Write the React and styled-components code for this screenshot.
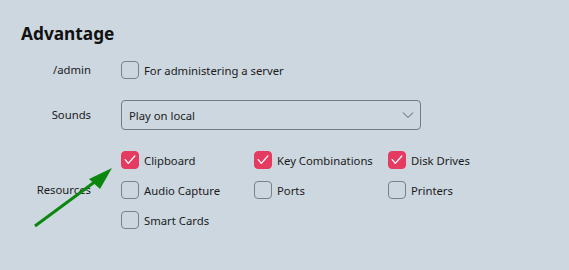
import React from "react";
import styled, { createGlobalStyle } from "styled-components";

const Global = createGlobalStyle`
  html, body { margin: 0; padding: 0; background: #cdd7e0; }
  body { font-family: "Segoe UI", "Noto Sans", "Open Sans", sans-serif; color: #1b1b1b; }
`;

const Page = styled.div`
  position: relative;
  width: 569px;
  height: 270px;
  box-sizing: border-box;
  padding: 22px 0 0 21px;
  background: #cdd7e0;
  overflow: hidden;
`;

const Title = styled.h1`
  margin: 0 0 9px;
  font-size: 17.3px;
  font-weight: 700;
  line-height: 24px;
  color: #111;
`;

const Form = styled.div`
  display: grid;
  grid-template-columns: 70px 1fr;
  column-gap: 30px;
  row-gap: 15px;
  align-items: center;
`;

const Label = styled.div`
  font-size: 11.3px;
  text-align: right;
  line-height: 30px;
`;

const Field = styled.div`
  display: flex;
  align-items: center;
  min-height: 30px;
`;

const CheckRow = styled.label`
  display: flex;
  align-items: center;
  gap: 5px;
  height: 30px;
  font-size: 11.3px;
  white-space: nowrap;
`;

const Box = styled.span`
  box-sizing: border-box;
  width: 18px;
  height: 18px;
  border-radius: 4px;
  border: 1px solid ${(p) => (p.$checked ? "#e63b61" : "#7a808d")};
  background: ${(p) => (p.$checked ? "#e63b61" : "transparent")};
  display: flex;
  align-items: center;
  justify-content: center;
  flex: none;
`;

const Select = styled.div`
  box-sizing: border-box;
  width: 300px;
  height: 30px;
  border: 1px solid #737a88;
  border-radius: 4px;
  display: flex;
  align-items: center;
  justify-content: space-between;
  padding: 0 6px 0 7px;
  font-size: 11.3px;
`;

const CheckGrid = styled.div`
  display: grid;
  grid-template-columns: 133px 134px auto;
`;

const Arrow = styled.svg`
  position: absolute;
  left: 0;
  top: 0;
  pointer-events: none;
`;

function Check({ checked, children }) {
  return (
    <CheckRow>
      <Box $checked={checked}>
        {checked && (
          <svg width="12" height="10" viewBox="0 0 12 10">
            <path d="M1.2 4.6 L4.3 8.4 L10.8 1" fill="none" stroke="#fff" strokeWidth="1.3" strokeLinecap="round" strokeLinejoin="round" />
          </svg>
        )}
      </Box>
      {children}
    </CheckRow>
  );
}

export default function App() {
  return (
    <>
      <Global />
      <Page>
        <Title>Advantage</Title>
        <Form>
          <Label>/admin</Label>
          <Field>
            <Check>For administering a server</Check>
          </Field>
          <Label>Sounds</Label>
          <Field>
            <Select>
              <span>Play on local</span>
              <svg width="12" height="8" viewBox="0 0 12 8">
                <path d="M1 1.5 L6 6.5 L11 1.5" fill="none" stroke="#555b66" strokeWidth="1" />
              </svg>
            </Select>
          </Field>
          <Label>Resources</Label>
          <CheckGrid>
            <Check checked>Clipboard</Check>
            <Check checked>Key Combinations</Check>
            <Check checked>Disk Drives</Check>
            <Check>Audio Capture</Check>
            <Check>Ports</Check>
            <Check>Printers</Check>
            <Check>Smart Cards</Check>
          </CheckGrid>
        </Form>
        <Arrow width="569" height="270" viewBox="0 0 569 270">
          <line x1="35" y1="226" x2="100" y2="178" stroke="#0b870f" strokeWidth="3" />
          <polygon points="112,168 89,179 100,189" fill="#0b870f" />
        </Arrow>
      </Page>
    </>
  );
}
